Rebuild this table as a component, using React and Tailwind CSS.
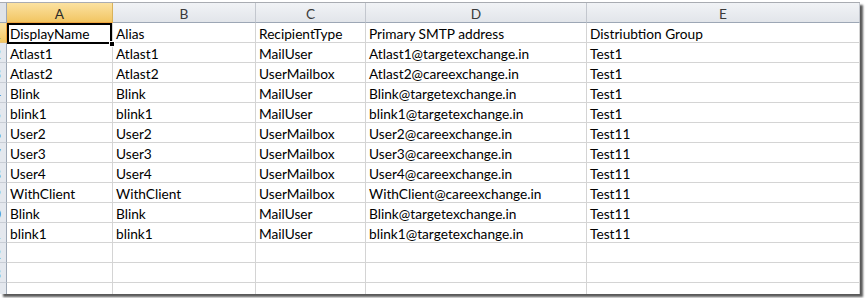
import React from "react";

const cols = [
  { key: "A", w: "w-[106px]" },
  { key: "B", w: "w-[143px]" },
  { key: "C", w: "w-[110px]" },
  { key: "D", w: "w-[221px]" },
  { key: "E", w: "w-[273px]" },
];

const rows = [
  ["DisplayName", "Alias", "RecipientType", "Primary SMTP address", "Distriubtion Group"],
  ["Atlast1", "Atlast1", "MailUser", "Atlast1@targetexchange.in", "Test1"],
  ["Atlast2", "Atlast2", "UserMailbox", "Atlast2@careexchange.in", "Test1"],
  ["Blink", "Blink", "MailUser", "Blink@targetexchange.in", "Test1"],
  ["blink1", "blink1", "MailUser", "blink1@targetexchange.in", "Test1"],
  ["User2", "User2", "UserMailbox", "User2@careexchange.in", "Test11"],
  ["User3", "User3", "UserMailbox", "User3@careexchange.in", "Test11"],
  ["User4", "User4", "UserMailbox", "User4@careexchange.in", "Test11"],
  ["WithClient", "WithClient", "UserMailbox", "WithClient@careexchange.in", "Test11"],
  ["Blink", "Blink", "MailUser", "Blink@targetexchange.in", "Test11"],
  ["blink1", "blink1", "MailUser", "blink1@targetexchange.in", "Test11"],
  ["", "", "", "", ""],
  ["", "", "", "", ""],
  ["", "", "", "", ""],
];

const font = { fontFamily: "Lato, 'Open Sans', sans-serif" };

function RowHeader({ n, selected }) {
  return (
    <div
      className={`w-[7px] h-[20px] shrink-0 flex justify-end items-start pt-[3px] overflow-hidden border-r border-b ${
        selected
          ? "bg-gradient-to-b from-[#fbe3a3] to-[#f3c863] border-r-[#f2a43a] border-b-[#e9c27a]"
          : "bg-[#e4e8ee] border-r-[#9da7b5] border-b-[#c9ced6]"
      }`}
    >
      <span className={`mr-[5px] text-[13.7px] leading-[16px] whitespace-nowrap ${selected ? "text-[#333]" : "text-[#3b6fb6]"}`}>
        {n}
      </span>
    </div>
  );
}

export default function App() {
  return (
    <div className="w-[866px] h-[298px] bg-white overflow-hidden pt-[2px]" style={font}>
      <div className="relative w-[860px] h-[292px] border-t border-[#a9acb2] shadow-[3px_3px_2px_rgba(0,0,0,0.65)] bg-white overflow-hidden">
        {/* column headers */}
        <div className="flex h-[20px]">
          <div className="w-[7px] h-[20px] shrink-0 bg-[#dfe3e8] border-r border-b border-[#9da7b5]" />
          {cols.map((c, i) => (
            <div
              key={c.key}
              className={`${c.w} shrink-0 h-[20px] flex items-start justify-center pt-[3px] border-r border-b ${
                i === 0
                  ? "bg-gradient-to-b from-[#fbe2a0] to-[#f2c561] border-r-[#d9b25a] border-b-[#f0a640] text-[#2a2a2a]"
                  : "bg-gradient-to-b from-[#f1f3f6] to-[#e2e5ea] border-r-[#c3c7ce] border-b-[#9da7b5] text-[#3a3a3a]"
              }`}
            >
              <span className="text-[13.7px] leading-[16px]">{c.key}</span>
            </div>
          ))}
        </div>

        {/* data rows */}
        {rows.map((r, ri) => (
          <div key={ri} className="flex h-[20px]">
            <RowHeader n={ri + 1} selected={ri === 0} />
            {cols.map((c, ci) => (
              <div
                key={c.key}
                className={`${c.w} shrink-0 h-[20px] border-r border-b border-[#d4d4d4] pl-[3px] pt-[3px] flex items-start overflow-hidden`}
              >
                <span className="text-[13.7px] leading-[16px] text-black whitespace-nowrap">{r[ci]}</span>
              </div>
            ))}
          </div>
        ))}

        {/* active cell frame with fill handle */}
        <div className="absolute left-[7px] top-[20px] w-[105px] h-[21px] border-2 border-black pointer-events-none" />
        <div className="absolute left-[109px] top-[38px] w-[6px] h-[6px] bg-black border border-white pointer-events-none" />
      </div>
    </div>
  );
}
